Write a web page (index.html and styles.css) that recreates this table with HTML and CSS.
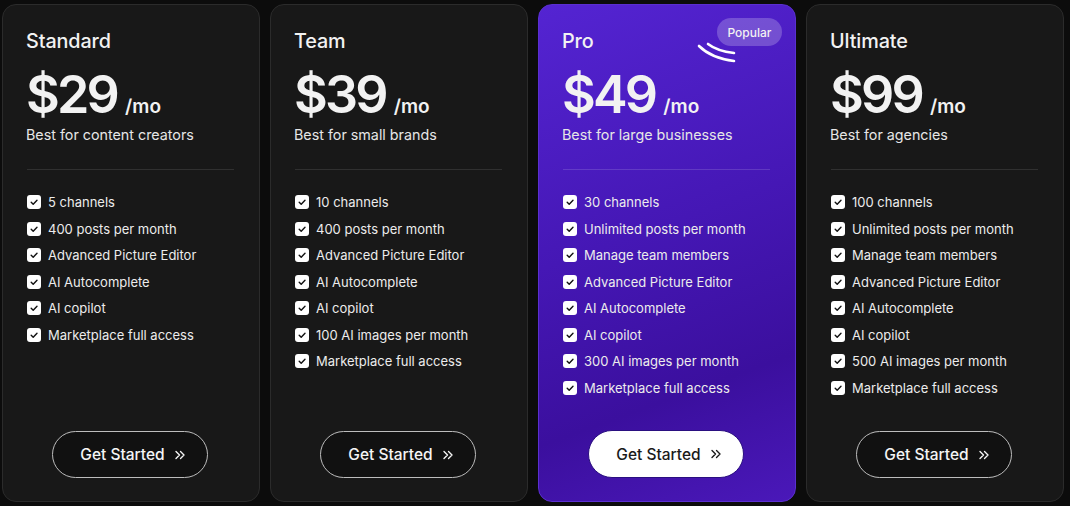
FILE: index.html
```html
<!DOCTYPE html>
<html>
<head>
<meta charset="utf-8">
<link rel="stylesheet" href="styles.css">
</head>
<body>
<div class="plans">
  <div class="card">
    <div class="name">Standard</div>
    <div class="price"><span class="amount">$29</span><span class="per">/mo</span></div>
    <div class="desc">Best for content creators</div>
    <div class="divider"></div>
    <ul class="features">
      <li><span class="check"><svg viewBox="0 0 14 14"><path d="M4.2 7.2l2 2 3.8-4"/></svg></span>5 channels</li>
      <li><span class="check"><svg viewBox="0 0 14 14"><path d="M4.2 7.2l2 2 3.8-4"/></svg></span>400 posts per month</li>
      <li><span class="check"><svg viewBox="0 0 14 14"><path d="M4.2 7.2l2 2 3.8-4"/></svg></span>Advanced Picture Editor</li>
      <li><span class="check"><svg viewBox="0 0 14 14"><path d="M4.2 7.2l2 2 3.8-4"/></svg></span>AI Autocomplete</li>
      <li><span class="check"><svg viewBox="0 0 14 14"><path d="M4.2 7.2l2 2 3.8-4"/></svg></span>AI copilot</li>
      <li><span class="check"><svg viewBox="0 0 14 14"><path d="M4.2 7.2l2 2 3.8-4"/></svg></span>Marketplace full access</li>
    </ul>
    <button class="btn">Get Started <svg class="chev" viewBox="0 0 12 12"><path d="M2 2.5l3.5 3.5-3.5 3.5M6.5 2.5l3.5 3.5-3.5 3.5"/></svg></button>
  </div>
  <div class="card">
    <div class="name">Team</div>
    <div class="price"><span class="amount">$39</span><span class="per">/mo</span></div>
    <div class="desc">Best for small brands</div>
    <div class="divider"></div>
    <ul class="features">
      <li><span class="check"><svg viewBox="0 0 14 14"><path d="M4.2 7.2l2 2 3.8-4"/></svg></span>10 channels</li>
      <li><span class="check"><svg viewBox="0 0 14 14"><path d="M4.2 7.2l2 2 3.8-4"/></svg></span>400 posts per month</li>
      <li><span class="check"><svg viewBox="0 0 14 14"><path d="M4.2 7.2l2 2 3.8-4"/></svg></span>Advanced Picture Editor</li>
      <li><span class="check"><svg viewBox="0 0 14 14"><path d="M4.2 7.2l2 2 3.8-4"/></svg></span>AI Autocomplete</li>
      <li><span class="check"><svg viewBox="0 0 14 14"><path d="M4.2 7.2l2 2 3.8-4"/></svg></span>AI copilot</li>
      <li><span class="check"><svg viewBox="0 0 14 14"><path d="M4.2 7.2l2 2 3.8-4"/></svg></span>100 AI images per month</li>
      <li><span class="check"><svg viewBox="0 0 14 14"><path d="M4.2 7.2l2 2 3.8-4"/></svg></span>Marketplace full access</li>
    </ul>
    <button class="btn">Get Started <svg class="chev" viewBox="0 0 12 12"><path d="M2 2.5l3.5 3.5-3.5 3.5M6.5 2.5l3.5 3.5-3.5 3.5"/></svg></button>
  </div>
  <div class="card pro">
    <span class="badge">Popular</span>
    <svg class="swoosh" viewBox="0 0 40 24"><path d="M11 3Q20 10 37 12"/><path d="M2 5Q14 17 37 20"/></svg>
    <div class="name">Pro</div>
    <div class="price"><span class="amount">$49</span><span class="per">/mo</span></div>
    <div class="desc">Best for large businesses</div>
    <div class="divider"></div>
    <ul class="features">
      <li><span class="check"><svg viewBox="0 0 14 14"><path d="M4.2 7.2l2 2 3.8-4"/></svg></span>30 channels</li>
      <li><span class="check"><svg viewBox="0 0 14 14"><path d="M4.2 7.2l2 2 3.8-4"/></svg></span>Unlimited posts per month</li>
      <li><span class="check"><svg viewBox="0 0 14 14"><path d="M4.2 7.2l2 2 3.8-4"/></svg></span>Manage team members</li>
      <li><span class="check"><svg viewBox="0 0 14 14"><path d="M4.2 7.2l2 2 3.8-4"/></svg></span>Advanced Picture Editor</li>
      <li><span class="check"><svg viewBox="0 0 14 14"><path d="M4.2 7.2l2 2 3.8-4"/></svg></span>AI Autocomplete</li>
      <li><span class="check"><svg viewBox="0 0 14 14"><path d="M4.2 7.2l2 2 3.8-4"/></svg></span>AI copilot</li>
      <li><span class="check"><svg viewBox="0 0 14 14"><path d="M4.2 7.2l2 2 3.8-4"/></svg></span>300 AI images per month</li>
      <li><span class="check"><svg viewBox="0 0 14 14"><path d="M4.2 7.2l2 2 3.8-4"/></svg></span>Marketplace full access</li>
    </ul>
    <button class="btn">Get Started <svg class="chev" viewBox="0 0 12 12"><path d="M2 2.5l3.5 3.5-3.5 3.5M6.5 2.5l3.5 3.5-3.5 3.5"/></svg></button>
  </div>
  <div class="card">
    <div class="name">Ultimate</div>
    <div class="price"><span class="amount">$99</span><span class="per">/mo</span></div>
    <div class="desc">Best for agencies</div>
    <div class="divider"></div>
    <ul class="features">
      <li><span class="check"><svg viewBox="0 0 14 14"><path d="M4.2 7.2l2 2 3.8-4"/></svg></span>100 channels</li>
      <li><span class="check"><svg viewBox="0 0 14 14"><path d="M4.2 7.2l2 2 3.8-4"/></svg></span>Unlimited posts per month</li>
      <li><span class="check"><svg viewBox="0 0 14 14"><path d="M4.2 7.2l2 2 3.8-4"/></svg></span>Manage team members</li>
      <li><span class="check"><svg viewBox="0 0 14 14"><path d="M4.2 7.2l2 2 3.8-4"/></svg></span>Advanced Picture Editor</li>
      <li><span class="check"><svg viewBox="0 0 14 14"><path d="M4.2 7.2l2 2 3.8-4"/></svg></span>AI Autocomplete</li>
      <li><span class="check"><svg viewBox="0 0 14 14"><path d="M4.2 7.2l2 2 3.8-4"/></svg></span>AI copilot</li>
      <li><span class="check"><svg viewBox="0 0 14 14"><path d="M4.2 7.2l2 2 3.8-4"/></svg></span>500 AI images per month</li>
      <li><span class="check"><svg viewBox="0 0 14 14"><path d="M4.2 7.2l2 2 3.8-4"/></svg></span>Marketplace full access</li>
    </ul>
    <button class="btn">Get Started <svg class="chev" viewBox="0 0 12 12"><path d="M2 2.5l3.5 3.5-3.5 3.5M6.5 2.5l3.5 3.5-3.5 3.5"/></svg></button>
  </div>
</div>
</body>
</html>
```

FILE: styles.css
```css
* { box-sizing: border-box; }
html, body { margin: 0; padding: 0; }
body {
  background: #0c0c0c;
  font-family: "Inter", "Noto Sans", sans-serif;
  color: #f2f2f2;
  width: 1070px;
  height: 506px;
  overflow: hidden;
}
.plans {
  display: flex;
  gap: 10px;
  padding: 4px 0 4px 2px;
  height: 506px;
}
.card {
  position: relative;
  width: 258px;
  height: 498px;
  flex: none;
  background: #181818;
  border: 1px solid #2b2b2b;
  border-radius: 14px;
  padding: 24px 23px 23px 23px;
  display: flex;
  flex-direction: column;
}
.pro {
  background: linear-gradient(160deg, #5424d2 0%, #4517b5 45%, #3b0f9e 75%, #4a18b9 100%);
  border-color: #5a2fd0;
}
.name {
  font-size: 19.8px;
  font-weight: 500;
  line-height: 24px;
  letter-spacing: -0.1px;
}
.price {
  display: flex;
  align-items: baseline;
  margin-top: 16px;
  height: 52px;
}
.amount {
  font-size: 52px;
  line-height: 52px;
  font-weight: 600;
  letter-spacing: -2.8px;
}
.per {
  font-size: 19px;
  line-height: 1;
  font-weight: 600;
  margin-left: 8px;
}
.desc {
  font-size: 14.3px;
  line-height: 20px;
  margin-top: 4px;
  color: #e6e6e6;
}
.divider {
  height: 1px;
  background: #303030;
  margin: 24px 2px 0 1px;
}
.pro .divider { background: rgba(255,255,255,0.14); }
.features {
  list-style: none;
  margin: 23px 0 0 0;
  padding: 0 0 0 1px;
  display: flex;
  flex-direction: column;
  gap: 8.5px;
}
.features li {
  display: flex;
  align-items: center;
  gap: 7px;
  font-size: 13px;
  line-height: 18px;
  color: #ececec;
}
.check {
  width: 14px;
  height: 14px;
  background: #fff;
  border-radius: 3px;
  flex: none;
  display: flex;
}
.check svg {
  width: 14px;
  height: 14px;
  fill: none;
  stroke: #111;
  stroke-width: 1.4;
  stroke-linecap: round;
  stroke-linejoin: round;
}
.btn {
  margin: auto auto 0 auto;
  width: 156px;
  height: 47px;
  border-radius: 24px;
  border: 1px solid #bdbdbd;
  background: #111;
  color: #f5f5f5;
  font-family: inherit;
  font-size: 15.5px;
  font-weight: 500;
  display: flex;
  align-items: center;
  justify-content: center;
  gap: 9px;
  padding: 0 0 0 6px;
  cursor: pointer;
  position: relative;
  left: -1px;
}
.chev {
  width: 12px;
  height: 12px;
  fill: none;
  stroke: currentColor;
  stroke-width: 1.4;
  stroke-linecap: round;
  stroke-linejoin: round;
}
.pro .btn {
  background: #fff;
  color: #1a1a1a;
  border: 1px solid #2a0f80;
  height: 48px;
}
.badge {
  position: absolute;
  top: 13px;
  right: 13px;
  width: 65px;
  height: 28px;
  border-radius: 14px;
  background: rgba(255,255,255,0.22);
  font-size: 12px;
  font-weight: 500;
  display: flex;
  align-items: center;
  justify-content: center;
}
.swoosh {
  position: absolute;
  left: 158px;
  top: 36px;
  width: 40px;
  height: 24px;
  fill: none;
  stroke: #fff;
  stroke-width: 2.6;
  stroke-linecap: round;
}
```
